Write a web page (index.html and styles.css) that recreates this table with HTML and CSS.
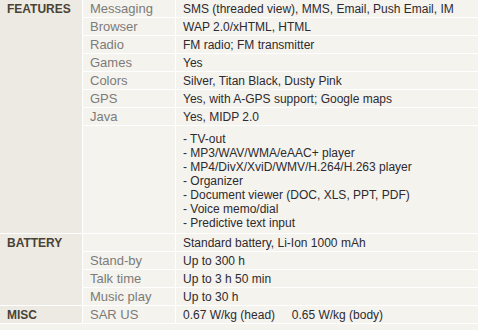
FILE: index.html
```html
<!DOCTYPE html>
<html>
<head>
<meta charset="utf-8">
<link rel="stylesheet" href="styles.css">
</head>
<body>
<table class="specs">
  <tr>
    <th class="cat" rowspan="8">FEATURES</th>
    <td class="lbl">Messaging</td>
    <td class="val">SMS (threaded view), MMS, Email, Push Email, IM</td>
  </tr>
  <tr><td class="lbl">Browser</td><td class="val">WAP 2.0/xHTML, HTML</td></tr>
  <tr><td class="lbl">Radio</td><td class="val">FM radio; FM transmitter</td></tr>
  <tr><td class="lbl">Games</td><td class="val">Yes</td></tr>
  <tr><td class="lbl">Colors</td><td class="val">Silver, Titan Black, Dusty Pink</td></tr>
  <tr><td class="lbl">GPS</td><td class="val">Yes, with A-GPS support; Google maps</td></tr>
  <tr><td class="lbl">Java</td><td class="val">Yes, MIDP 2.0</td></tr>
  <tr>
    <td class="lbl"></td>
    <td class="val multi">- TV-out<br>- MP3/WAV/WMA/eAAC+ player<br>- MP4/DivX/XviD/WMV/H.264/H.263 player<br>- Organizer<br>- Document viewer (DOC, XLS, PPT, PDF)<br>- Voice memo/dial<br>- Predictive text input</td>
  </tr>
  <tr>
    <th class="cat" rowspan="4">BATTERY</th>
    <td class="lbl"></td>
    <td class="val">Standard battery, Li-Ion 1000 mAh</td>
  </tr>
  <tr><td class="lbl">Stand-by</td><td class="val">Up to 300 h</td></tr>
  <tr><td class="lbl">Talk time</td><td class="val">Up to 3 h 50 min</td></tr>
  <tr><td class="lbl">Music play</td><td class="val">Up to 30 h</td></tr>
  <tr>
    <th class="cat">MISC</th>
    <td class="lbl">SAR US</td>
    <td class="val">0.67 W/kg (head)&nbsp;&nbsp;&nbsp;&nbsp; 0.65 W/kg (body)</td>
  </tr>
</table>
</body>
</html>
```
FILE: styles.css
```css
html, body {
  margin: 0;
  padding: 0;
  background: #f4f3ee;
}
.specs {
  width: 478px;
  border-collapse: collapse;
  font-family: "Liberation Sans", Arial, sans-serif;
  font-size: 12px;
  line-height: 14px;
}
.specs th, .specs td {
  border: 1px solid #ffffff;
  vertical-align: top;
  padding: 2px 7px 1px 7px;
}
.specs tr:first-child th, .specs tr:first-child td {
  border-top: none;
}
.specs th:first-child, .specs td:first-child {
  border-left: none;
}
.specs td:last-child {
  border-right: none;
}
.specs .cat {
  width: 68px;
  background: #eceae2;
  color: #4a4236;
  font-weight: bold;
  font-size: 12px;
  text-align: left;
  padding-left: 7px;
}
.specs .lbl {
  width: 78px;
  background: #f4f3ee;
  color: #7c7b78;
  font-size: 13px;
}
.specs .val {
  background: #f4f3ee;
  color: #2e2a2e;
}
.specs .multi {
  padding-top: 6px;
  padding-bottom: 3px;
}
```
